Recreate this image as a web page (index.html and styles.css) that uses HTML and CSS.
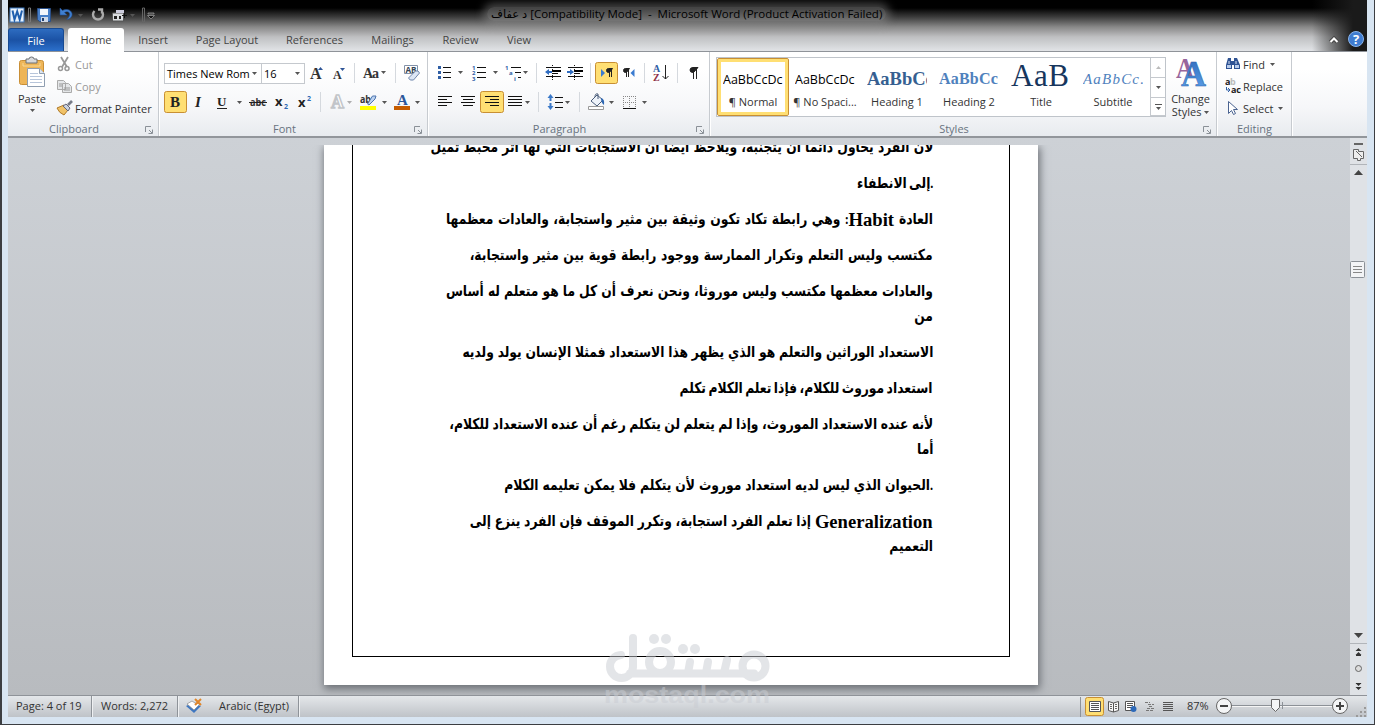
FILE: index.html
```html
<!DOCTYPE html>
<html lang="en">
<head>
  <meta charset="UTF-8" />
  <title>د عفاف [Compatibility Mode] - Microsoft Word</title>
  <link rel="stylesheet" href="styles.css">
</head>
<body>
  <svg class="defs" width="0" height="0">
    <defs>
      <path id="caret" d="M0 0h5L2.500 3z" fill="#555" />
      <path id="launcher" d="M.5 6V.5H6M4 4l3 3M7.500 3.500v4h-4" fill="none" stroke="#8a9097" />
      <linearGradient id="blueA" x1="0" y1="0" x2="0" y2="1"><stop offset="0" stop-color="#2c66b8" /><stop offset="1" stop-color="#5fa6ee" /></linearGradient>
    </defs>
  </svg>
  <div class="window">
    <div class="top">
      <div class="titlebar">
        <svg class="quick" width="150" height="28" viewBox="8 0 150 28">
          <rect x="10" y="8" width="14" height="14" fill="#e9f2fb" stroke="#3a76bd" />
          <path d="M12.500 10.500l2 9 2.700-8 2.500 8 2.300-9" fill="none" stroke="#1f5fae" stroke-width="2" />
          <path d="M28.500 8v14h2V8z" fill="none" stroke="#777" />
          <path d="M37.500 8.500h13v13h-11l-2-2z" fill="#477fc8" stroke="#2b4f86" />
          <path d="M40 9h8v6h-8z" fill="#f3f6fb" /><path d="M41 17h7v5h-7z" fill="#cfd9e8" /><path d="M42 18h2v3h-2z" fill="#24406e" />
          <path d="M60 8v7h7l-2.500-2.500c3-2 6 0 5 3-.5 2-2 3-3 4 4-.5 6-3 5.500-6-1-4-6-5-9.500-3z" fill="#3f7fd0" stroke="#234f90" stroke-width=".6" />
          <use href="#caret" x="78" y="14" />
          <path d="M94.500 11a5 5 0 1 0 7 0M98 9.500h4v4" fill="none" stroke="#aaa" stroke-width="2.400" />
          <path d="M112.500 13h11v8h-11z" fill="#dadde0" stroke="#555" /><path d="M116 10h8v3h-8z" fill="#ccd" /><path d="M114 16h3v3h-3zM119 16h2v3h-2z" fill="#222" /><path d="M122 15.500h5M124.500 13v5" stroke="#111" />
          <use href="#caret" x="130" y="14" />
          <path d="M142.500 8v14h2V8z" fill="none" stroke="#666" />
          <path d="M148 13h6v1h-6zM147.500 15.500h7l-3.500 3.500z" fill="#111" stroke="#bbb" stroke-width=".6" />
        </svg>
        <div class="title"><bdi>د عفاف</bdi> [Compatibility Mode] &nbsp;-&nbsp; Microsoft Word (Product Activation Failed)</div>
      </div>
      <div class="tabs">
        <div class="file">File</div>
        <div class="tab active">Home</div>
        <div class="tab insert">Insert</div>
        <div class="tab layout">Page Layout</div>
        <div class="tab refs">References</div>
        <div class="tab mail">Mailings</div>
        <div class="tab review">Review</div>
        <div class="tab view">View</div>
        <svg class="help" width="40" height="23" viewBox="1327 28 40 23">
          <path d="M1330.500 42l3.500-3.500 3.500 3.500" fill="none" stroke="#444" stroke-width="4" /><path d="M1330.500 42l3.500-3.500 3.500 3.500" fill="none" stroke="#fff" stroke-width="2" />
          <circle cx="1356" cy="39" r="7.500" fill="#3f7cd0" stroke="#8ab4ea" />
          <text x="1356" y="44" text-anchor="middle" font-size="13" font-weight="bold" fill="#fff">?</text>
        </svg>
      </div>
    </div>

    <div class="ribbon">
      <div class="group clipboard">
        <div class="group-body">
          <div class="paste">
            <svg width="28" height="34" viewBox="19 55 28 34">
              <rect x="20.500" y="60.500" width="24" height="24" rx="2" fill="#eeb557" stroke="#c98f36" />
              <path d="M27 61v-2h3q0-2 2.500-2t2.500 2h3v4H27z" fill="#d7d9dc" stroke="#6d7075" />
              <path d="M24 63v3h17v-3" fill="none" stroke="#f8d999" />
              <path d="M28.500 68.500h12l5 5v13h-17z" fill="#fff" stroke="#8e9db0" /><path d="M40.500 68.500v5h5" fill="#dde5ef" stroke="#8e9db0" />
              <path d="M31 73.500h8M31 76.500h12M31 79.500h12M31 82.500h12" stroke="#b7c5da" />
            </svg>
            <span>Paste</span>
            <svg width="5" height="3"><use href="#caret" /></svg>
          </div>
          <div class="clip-list">
            <div class="cmd off">
              <svg width="17" height="16" viewBox="0 0 17 16"><path d="M5 1l6 10M12 1L6 11" stroke="#999" stroke-width="1.800" /><circle cx="4.500" cy="12.500" r="2" fill="none" stroke="#999" stroke-width="1.500" /><circle cx="11" cy="12.500" r="2" fill="none" stroke="#999" stroke-width="1.500" /></svg>
              Cut
            </div>
            <div class="cmd off">
              <svg width="17" height="16" viewBox="0 0 17 16"><path d="M1.500 2.500h6l2 2v7h-8zM6.500 5.500h6l3 3v6h-9z" fill="#e4e6e8" stroke="#aaa" /><path d="M3 6h3M3 8h3M8 10h6M8 12h6" stroke="#999" /></svg>
              Copy
            </div>
            <div class="cmd">
              <svg width="17" height="16" viewBox="0 0 17 16"><path d="M1 8l7-3 4 5-4 5q-5-2-7-7z" fill="#f0c268" stroke="#b07a28" /><path d="M7 6l3-2 4 4-2 3z" fill="#c9d2df" stroke="#667" /><path d="M12 5l4-4" stroke="#777c88" stroke-width="2.600" /></svg>
              Format Painter
            </div>
          </div>
        </div>
        <div class="group-label">Clipboard<svg width="8" height="8"><use href="#launcher" /></svg></div>
      </div>

      <div class="group font">
        <div class="group-body rows">
          <div class="row">
            <div class="combo name">Times New Rom<svg width="5" height="3"><use href="#caret" /></svg></div>
            <div class="combo size">16<svg width="5" height="3"><use href="#caret" /></svg></div>
            <svg width="121" height="24" viewBox="305 61 121 24">
              <g class="serif" fill="#333" font-weight="bold"><text x="310" y="79" font-size="16">A</text><text x="333" y="79" font-size="12">A</text><text x="363" y="78" font-size="14" textLength="16">Aa</text></g>
              <path d="M318 70l2.500-3 2.500 3z" fill="#2f5597" /><path d="M340 68h5l-2.500 3z" fill="#2f5597" />
              <path d="M354.500 63v20M395.500 63v20" stroke="#d5d9de" />
              <use href="#caret" x="381" y="71" />
              <path d="M404.500 65.500h13v8h-13z" fill="#fff" stroke="#8291a8" /><text x="405.500" y="72.500" font-size="8" font-weight="bold" textLength="11" lengthAdjust="spacingAndGlyphs" fill="#345">AB</text>
              <path d="M408.500 78l7-7q3-1 4 2l-6 7q-4 1-5-2z" fill="#dce6f5" stroke="#6f86ab" />
            </svg>
          </div>
          <div class="row">
            <svg width="262" height="24" viewBox="164 90 262 24">
              <rect x="164.500" y="91.500" width="22" height="21" rx="2" fill="#ffdf73" stroke="#c88f33" />
              <g class="serif" fill="#222" font-weight="bold"><text x="170" y="107" font-size="15">B</text><text x="195" y="107" font-size="15" font-style="italic">I</text><text x="217" y="106" font-size="13">U</text></g>
              <path d="M217 108.500h10" stroke="#222" />
              <use href="#caret" x="237" y="101" />
              <text x="250" y="106" font-size="11" font-weight="bold" fill="#333" textLength="16" lengthAdjust="spacingAndGlyphs">abc</text><path d="M249 102.500h18" stroke="#222" />
              <g font-weight="bold" fill="#222"><text x="275" y="106" font-size="13">x</text><text x="298" y="107" font-size="13">x</text></g>
              <g font-weight="bold" fill="#2e69b5" font-size="7"><text x="284" y="109">2</text><text x="307" y="101">2</text></g>
              <path d="M320.500 92v20" stroke="#d5d9de" />
              <text class="serif" x="331" y="108" font-size="18" font-weight="bold" fill="#fff" stroke="#c2c5c9" stroke-width="1.400">A</text>
              <use href="#caret" x="347" y="101" opacity=".45" />
              <text x="360" y="103" font-size="10" font-weight="bold" fill="#333" textLength="11" lengthAdjust="spacingAndGlyphs">ab</text>
              <path d="M367.500 104l5-8 3.500 0-1 3-6 6z" fill="#bcd2f0" stroke="#4d74ae" />
              <path d="M360 106h16v4h-16z" fill="#ffff00" />
              <use href="#caret" x="382" y="101" />
              <text class="serif" x="397" y="105" font-size="15" font-weight="bold" fill="#2b579a">A</text>
              <path d="M394 106h16v4h-16z" fill="#c65c00" />
              <use href="#caret" x="415" y="101" />
            </svg>
          </div>
        </div>
        <div class="group-label">Font<svg width="8" height="8"><use href="#launcher" /></svg></div>
      </div>

      <div class="group paragraph">
        <div class="group-body rows">
          <div class="row">
            <svg width="280" height="24" viewBox="428 61 280 24">
              <path d="M438 66h3v3h-3zM438 71h3v3h-3zM438 76h3v3h-3z" fill="#2f5ea5" />
              <path d="M443 67.500h8M443 72.500h8M443 77.500h8M477 67.500h9M477 72.500h9M477 77.500h9M511 67.500h10M515 72.500h6M518 77.500h3" stroke="#111" />
              <use href="#caret" x="458" y="71" /><use href="#caret" x="493" y="71" /><use href="#caret" x="523" y="71" />
              <g font-size="6" font-weight="bold" fill="#2f5ea5"><text x="472" y="69.500">1</text><text x="472" y="75">2</text><text x="472" y="80.500">3</text><text x="505" y="69.500">1</text><text x="509" y="75">a</text><text x="514" y="80.500">i</text></g>
              <path d="M536.500 63v20M590.500 63v20M644.500 63v20M677.500 63v20" stroke="#d5d9de" />
              <path d="M546 67.500h15M552 70.500h9M552 73.500h6M546 76.500h15M568 67.500h15M574 70.500h9M574 73.500h6M568 76.500h15" stroke="#111" /><path d="M552 70h9v2h-9zM574 70h9v2h-9z" />
              <path d="M552.500 65v15M574.500 65v15" stroke="#111" stroke-dasharray="1 1" />
              <path d="M545 72l4-3v2h3v2h-3v2zM574 72l-4-3v2h-3v2h3v2z" fill="#2f6cc0" />
              <rect x="595.500" y="62.500" width="22" height="21" rx="2" fill="#ffdf73" stroke="#c88f33" />
              <path d="M601 69v8l4-4z" fill="#3a7bd0" /><path d="M634.500 69v8l-4-4z" fill="#3a7bd0" />
              <path id="pilcrow" d="M611.500 69v8M609.500 69v8M612.500 68.500h-4q-2 0-2 2t2 2h1z" fill="#222" stroke="#222" />
              <use href="#pilcrow" x="17" />
              <g font-weight="bold" class="serif" font-size="10"><text x="653" y="72" fill="#2f5ea5">A</text><text x="653" y="81" fill="#8e2f46">Z</text></g>
              <path d="M665.500 65v14M662.500 76l3 3 3-3" stroke="#222" fill="none" />
              <path d="M696.500 68v11M693.500 68v11M698 67.500h-5q-3 0-3 2.500t3 2.500h.5z" fill="#222" stroke="#222" />
            </svg>
          </div>
          <div class="row">
            <svg width="280" height="24" viewBox="428 90 280 24">
              <rect x="480.500" y="91.500" width="23" height="21" rx="2" fill="#ffdf73" stroke="#c88f33" />
              <path d="M438 96.500h14M438 99.500h9M438 102.500h14M438 105.500h9M461 96.500h14M463 99.500h10M461 102.500h14M463 105.500h10M485 96.500h14M490 99.500h9M485 102.500h14M490 105.500h9M508 96.500h14M508 99.500h14M508 102.500h14M508 105.500h14M555 97.500h8M555 102.500h8M555 107.500h8" stroke="#111" />
              <use href="#caret" x="525" y="101" /><use href="#caret" x="565" y="101" /><use href="#caret" x="609" y="101" /><use href="#caret" x="642" y="101" />
              <path d="M550.500 94l3 4h-6zM550.500 110l3-4h-6z" fill="#3a78c8" /><path d="M550.500 97v10" stroke="#3a78c8" stroke-width="2" stroke-dasharray="4 2" />
              <path d="M538.500 92v20M579.500 92v20" stroke="#d5d9de" />
              <path d="M591 101l6-6 6 5-6 6z" fill="#eef3fa" stroke="#4a5d7a" /><path d="M595 97q0-4 3-3v5" stroke="#4a5d7a" fill="none" /><path d="M601 98q4 1 3 7-3-2-3-7z" fill="#2d67b3" />
              <path d="M588.500 106.500h15v3h-15z" fill="#fff" stroke="#999" />
              <path d="M623.500 96v12M629.500 96v12M635.500 96v12M623 96.500h13M623 102.500h13" stroke="#888" stroke-dasharray="1 1" /><path d="M623 108.500h13" stroke="#111" />
            </svg>
          </div>
        </div>
        <div class="group-label">Paragraph<svg width="8" height="8"><use href="#launcher" /></svg></div>
      </div>

      <div class="group styles">
        <div class="group-body">
          <div class="gallery">
            <div class="style selected"><b class="calibri">AaBbCcDc</b><span>¶ Normal</span></div>
            <div class="style"><b class="calibri">AaBbCcDc</b><span>¶ No Spaci...</span></div>
            <div class="style"><b class="h1">AaBbCc</b><span>Heading 1</span></div>
            <div class="style"><b class="h2">AaBbCc</b><span>Heading 2</span></div>
            <div class="style"><b class="big">AaB</b><span>Title</span></div>
            <div class="style"><b class="sub">AaBbCc.</b><span>Subtitle</span></div>
            <div class="gallery-scroll">
              <i><svg width="5" height="3"><path d="M0 3h5L2.500 0z" fill="#bbb" /></svg></i>
              <i><svg width="5" height="3"><use href="#caret" /></svg></i>
              <i><svg width="7" height="6"><path d="M0 .5h7" stroke="#555" /><use href="#caret" x="1" y="3" /></svg></i>
            </div>
          </div>
          <div class="change">
            <svg width="32" height="32" viewBox="1174 57 32 32">
              <g class="serif" font-weight="bold"><text x="1175" y="78" font-size="29" textLength="18" lengthAdjust="spacingAndGlyphs" fill="#97659b">A</text><text x="1180" y="86" font-size="36" textLength="25" lengthAdjust="spacingAndGlyphs" fill="url(#blueA)" stroke="#2b62a8" stroke-width=".5">A</text></g>
            </svg>
            <span>Change</span>
            <span>Styles <svg width="5" height="3"><use href="#caret" /></svg></span>
          </div>
        </div>
        <div class="group-label">Styles<svg width="8" height="8"><use href="#launcher" /></svg></div>
      </div>

      <div class="group editing">
        <div class="group-body">
          <div class="cmd">
            <svg width="16" height="16" viewBox="0 0 16 16"><path d="M3 2h3v3h3V2h3l3 7v4H9V9H7v4H1V9z" fill="#2f5394" /><path d="M2 9h4v3H2zM10 9h4v3h-4z" fill="#b9cdec" /><path d="M4 5v3M11 5v3" stroke="#dce6f5" /></svg>
            Find <svg class="dd" width="5" height="3"><use href="#caret" /></svg>
          </div>
          <div class="cmd">
            <svg width="16" height="16" viewBox="0 0 16 16"><g font-size="9" font-weight="bold" fill="#222"><text x="0" y="7">a</text><text x="5" y="7" fill="#bbb">b</text><text x="6" y="15" textLength="10">ac</text></g><path d="M1.500 9v3h3M3 10l2 2-2 2" stroke="#2f5ea5" fill="none" /></svg>
            Replace
          </div>
          <div class="cmd">
            <svg width="16" height="16" viewBox="0 0 16 16"><path d="M3.500 1.500v12l3-3 2 4 2-1-2-4h4z" fill="#fff" stroke="#4a6390" /></svg>
            Select <svg class="dd" width="5" height="3"><use href="#caret" /></svg>
          </div>
        </div>
        <div class="group-label">Editing</div>
      </div>
    </div>

    <div class="workspace">
      <div class="canvas">
        <div class="page">
          <div class="text" dir="rtl" lang="ar">
            <p class="w503">لأن الفرد يحاول دائما أن يتجنبه، ويلاحظ أيضا أن الاستجابات التي لها أثر محبط تميل</p>
            <p class="w75">.إلى الانطفاء</p>
            <p class="w487">العادة <span class="habit">Habit</span>: وهي رابطة تكاد تكون وثيقة بين مثير واستجابة، والعادات معظمها</p>
            <p class="w463">مكتسب وليس التعلم وتكرار الممارسة ووجود رابطة قوية بين مثير واستجابة،</p>
            <p class="w487">والعادات معظمها مكتسب وليس موروثا، ونحن نعرف أن كل ما هو متعلم له أساس</p>
            <p class="w18 wrap">من</p>
            <p class="w471">الاستعداد الوراثين والتعلم هو الذي يظهر هذا الاستعداد فمثلا الإنسان يولد ولديه</p>
            <p class="w253">استعداد موروث للكلام، فإذا تعلم الكلام تكلم</p>
            <p class="w484">لأنه عنده الاستعداد الموروث، وإذا لم يتعلم لن يتكلم رغم أن عنده الاستعداد للكلام،</p>
            <p class="w16 wrap">أما</p>
            <p class="w429">.الحيوان الذي ليس لديه استعداد موروث لأن يتكلم فلا يمكن تعليمه الكلام</p>
            <p class="w463"><span class="general">Generalization</span> إذا تعلم الفرد استجابة، وتكرر الموقف فإن الفرد ينزع إلى</p>
            <p class="w41 wrap">التعميم</p>
          </div>
        </div>
      </div>
      <div class="scrollbar">
        <svg width="17" height="35" viewBox="1350 141 17 35">
          <path d="M1354 143h9v2h-9z" fill="#666" /><path d="M1353.500 149.500h5v2h5v7h-3v2h-3v-2h-4zM1356 151l6 6" fill="#eee" stroke="#666" />
          <path d="M1350 164.500h17" stroke="#b1b5ba" /><path d="M1354 175h9l-4.500-5z" fill="#444" />
        </svg>
        <svg class="thumb" width="17" height="18" viewBox="0 0 17 18"><rect x=".5" y=".5" width="14" height="16" rx="1" fill="#f3f4f6" stroke="#8b9097" /><path d="M3 5.500h9M3 8.500h9M3 11.500h9" stroke="#888" /></svg>
        <svg width="17" height="64" viewBox="1350 631 17 64">
          <path d="M1354 633h9l-4.500 5z" fill="#444" /><path d="M1350 643.500h17" stroke="#b1b5ba" />
          <path d="M1355.500 651h6l-3-3zM1355.500 655h6l-3-3zM1355.500 683h6l-3 3zM1355.500 687h6l-3 3z" fill="#333" /><path d="M1356 655.500h5M1356 683.500h5" stroke="#333" />
          <circle cx="1358.500" cy="668.500" r="3" fill="#ddd" stroke="#666" />
        </svg>
      </div>
    </div>

    <div class="statusbar">
      <div class="cell pages">Page: 4 of 19</div>
      <div class="cell words">Words: 2,272</div>
      <div class="cell lang">
        <svg width="17" height="16" viewBox="186 698 17 16"><path d="M186 706l6-3 9 3-7 7z" fill="#3f77c0" /><path d="M187 704l5-3 3 2 5 1-6 6z" fill="#fff" stroke="#888" stroke-width=".7" /><path d="M195 699l6 6M201 699l-6 6" stroke="#e0862a" stroke-width="2" /></svg>
        <span>Arabic (Egypt)</span>
      </div>
      <svg class="views" width="100" height="21" viewBox="1080 696 100 21">
        <path d="M1080.500 697v20" stroke="#8e9399" />
        <rect x="1085.500" y="697.500" width="18" height="18" rx="2" fill="#ffdf73" stroke="#c88f33" />
        <path d="M1089.500 701.500h11v10h-11z" fill="#fff" stroke="#555" /><path d="M1091 703.500h8M1091 705.500h8M1091 707.500h8M1091 709.500h8" stroke="#555" />
        <path d="M1108.500 701.500l5 1.500 5-1.500v9l-5 1.500-5-1.500zM1113.500 703v9" fill="#f7f7f7" stroke="#555" /><path d="M1110 704.500h2M1110 706.500h2M1110 708.500h2M1115 704.500h2M1115 706.500h2M1115 708.500h2" stroke="#666" />
        <path d="M1125.500 701.500h9v9h-9z" fill="#fff" stroke="#555" /><path d="M1127 703.500h6M1127 705.500h6M1127 707.500h4" stroke="#555" /><circle cx="1133.500" cy="709" r="3" fill="#2d69b8" />
        <path d="M1145 702.500h5M1148 704.500h6M1149 706.500h4M1147 708.500h7M1146 710.500h8" stroke="#777" stroke-dasharray="3 1" />
        <path d="M1163 702.500h10M1163 704.500h10M1163 706.500h10M1163 708.500h10M1163 710.500h10" stroke="#555" />
      </svg>
      <div class="zoom">87%</div>
      <svg width="155" height="21" viewBox="1212 696 155 21">
        <path d="M1231 705.500h102" stroke="#8c9197" /><path d="M1231 706.500h102" stroke="#f5f5f5" /><path d="M1282.500 702v7" stroke="#8c9197" />
        <g fill="#f4f5f6" stroke="#666"><circle cx="1224" cy="706" r="7.500" /><circle cx="1340" cy="706" r="7.500" /><path d="M1271.500 699.500h8v8l-4 4-4-4z" /></g>
        <path d="M1220 706h8M1336 706h8M1340 702v8" stroke="#444" stroke-width="2" />
        <path d="M1364 707h2v2h-2zM1360 711h2v2h-2zM1364 711h2v2h-2zM1356 715h2v2h-2zM1360 715h2v2h-2zM1364 715h2v2h-2z" fill="#999" />
      </svg>
    </div>

    <svg class="watermark" width="170" height="78" viewBox="602 630 170 78">
      <g fill="none" stroke="#c9ccd2" stroke-width="8" stroke-linecap="round">
        <path d="M621 655a11.500 11.500 0 1 0 12 12V638M630 673.500H754" />
        <circle cx="754" cy="666" r="11.500" /><circle cx="660" cy="662" r="11" />
        <path d="M688 673l2-11M706 673l2-11M724 673l3-13" />
      </g>
      <g fill="#c9ccd2"><circle cx="654" cy="639" r="5" /><circle cx="666" cy="639" r="5" /><circle cx="683" cy="649" r="5" /><circle cx="695" cy="649" r="5" />
        <text x="604" y="703" textLength="166" lengthAdjust="spacingAndGlyphs">mostaql.com</text></g>
    </svg>
  </div>
</body>
</html>
```
FILE: styles.css
```css
* {
  box-sizing: border-box;
}
body {
  margin: 0;
  font-family: "Open Sans", "DejaVu Sans", sans-serif;
  font-size: 11px;
  color: #333;
  background: #000;
  overflow: hidden;
}
svg {
  display: block;
  flex: none;
}
.defs {
  position: absolute;
}
.serif {
  font-family: "Liberation Serif", serif;
}
.window {
  position: relative;
  width: 1375px;
  height: 725px;
  padding: 0 7px 0 6px;
  border: solid #3c3e42;
  border-width: 0 1px 1px 2px;
  background: #d8e5f2;
  display: flex;
  flex-direction: column;
}
.top {
  height: 52px;
  border-bottom: 1px solid #8f9399;
  background:
    linear-gradient(90deg, rgba(0,0,0,0) 1304px, #1a1a1a 1345px),
    linear-gradient(#000 8px, #3c3c3c 17px, #888 27px, #bfc0c2 37px, #e2e4e7 51px);
}
.titlebar {
  height: 28px;
  display: flex;
}
.title {
  margin-left: 329px;
  padding: 0 4px;
  height: 14px;
  margin-top: 7px;
  line-height: 14px;
  color: #000;
  font-size: 11.5px;
  letter-spacing: -0.02px;
  white-space: nowrap;
  border-radius: 8px;
  background: rgba(150, 150, 150, 0.45);
  box-shadow: 0 0 8px 4px rgba(150, 150, 150, 0.45);
}
.tabs {
  height: 23px;
  display: flex;
  line-height: 24px;
  color: #444;
}
.file {
  width: 56px;
  text-align: center;
  color: #fff;
  line-height: 23px;
  border: 1px solid #174a92;
  border-bottom: none;
  border-radius: 3px 3px 0 0;
  background: linear-gradient(#2d6cc0, #1b52a5 50%, #2c70cb);
}
.tab {
  text-align: center;
}
.active {
  width: 56px;
  height: 25px;
  margin-left: 4px;
  border-radius: 3px 3px 0 0;
  background: #fff;
}
.insert { width: 58px; }
.layout { width: 90px; }
.refs { width: 85px; }
.mail { width: 71px; }
.review { width: 65px; }
.view { width: 52px; }
.help {
  margin-left: auto;
}
.ribbon {
  height: 86px;
  display: flex;
  background: linear-gradient(#fff 20%, #f6f7f9 65%, #e8ebef);
  border-bottom: 2px solid #92969b;
}
.group {
  border-right: 1px solid #c7cbd0;
  box-shadow: 1px 0 #fff;
  display: flex;
  flex-direction: column;
}
.group-body {
  height: 70px;
  display: flex;
}
.rows {
  flex-direction: column;
  padding-top: 9px;
  gap: 5px;
}
.row {
  display: flex;
  height: 24px;
  align-items: center;
}
.group-label {
  position: relative;
  height: 14px;
  line-height: 14px;
  text-align: center;
  color: #68737f;
}
.group-label svg {
  position: absolute;
  right: 5px;
  top: 4px;
}
.clipboard { width: 151px; }
.clipboard .group-label { padding-right: 18px; }
.font { width: 269px; padding-left: 5px; }
.font .group-label { padding-right: 22px; }
.paragraph { width: 282px; }
.paragraph .group-label { padding-right: 18px; }
.styles { width: 507px; }
.styles .group-label { padding-right: 18px; }
.editing { width: 75px; padding-left: 8px; }
.editing .group-label { padding-right: 7px; }
.paste {
  width: 48px;
  padding-top: 3px;
  display: flex;
  flex-direction: column;
  align-items: center;
  line-height: 20px;
}
.clip-list {
  padding-top: 1px;
}
.cmd {
  height: 22px;
  display: flex;
  align-items: center;
  gap: 3px;
  white-space: nowrap;
}
.clip-list .cmd { gap: 2px; }
.off {
  color: #999;
}
.combo {
  height: 21px;
  border: 1px solid #c5c9ce;
  background: #fff;
  color: #000;
  display: flex;
  align-items: center;
  justify-content: space-between;
  padding: 0 4px 0 2px;
  line-height: 17px;
  white-space: nowrap;
}
.name { width: 98px; }
.size { width: 43px; border-left: none; }
.gallery {
  width: 450px;
  height: 60px;
  margin: 5px 0 0 6px;
  border: 1px solid #bfc4ca;
  background: #fff;
  display: flex;
}
.style {
  width: 72px;
  padding: 0 6px;
  text-align: center;
  white-space: nowrap;
  overflow: hidden;
}
.style b {
  display: flex;
  align-items: center;
  height: 36px;
  overflow: hidden;
  font-weight: normal;
  color: #000;
}
.style span {
  display: block;
  margin: 0 -6px;
  line-height: 16px;
}
.selected {
  height: 58px;
  padding: 0 3px;
  border: 1px solid #c88f33;
  border-radius: 2px;
  box-shadow: inset 0 0 0 3px #ffdf73;
}
.selected b { height: 35px; margin: 0 2px; }
.style .calibri { font-family: "Open Sans", sans-serif; font-size: 12.5px; padding-top: 6px; }
.style .h1 { font: bold 18.5px "Liberation Serif", serif; color: #365f91; padding-top: 6px; }
.style .h2 { font: bold 16px "Liberation Serif", serif; color: #4f81bd; padding-top: 6px; letter-spacing: 0.2px; }
.style .big { font: 31px "Liberation Serif", serif; color: #17365d; letter-spacing: 0.5px; }
.style .sub { font: italic 15px "Liberation Serif", serif; color: #4f81bd; letter-spacing: 1.2px; padding-top: 6px; }
.gallery-scroll {
  width: 15px;
  margin-left: auto;
  border-left: 1px solid #c5c9ce;
  display: grid;
  grid-template-rows: 20px 20px 18px;
}
.gallery-scroll i {
  display: grid;
  place-items: center;
  border-bottom: 1px solid #c5c9ce;
}
.change {
  width: 49px;
  padding-top: 5px;
  display: flex;
  flex-direction: column;
  align-items: center;
  line-height: 13px;
}
.change svg + span { margin-top: 3px; }
.change span svg { display: inline-block; vertical-align: 2px; }
.editing .group-body {
  flex-direction: column;
  padding-top: 1px;
}
.editing .cmd { gap: 2px; }
.dd { margin-left: 3px; }
.workspace {
  height: 557px;
  display: flex;
  background: linear-gradient(#cdd1d6, #b8bbbf);
}
.canvas {
  width: 1342px;
  padding: 7px 0 0 316px;
  overflow: hidden;
}
.page {
  width: 714px;
  height: 540px;
  padding: 0 28px 28px;
  background: #fff;
  box-shadow: 1px 3px 8px 1px #6c7076;
  clip-path: inset(0 -15px -15px -15px);
}
.text {
  height: 512px;
  padding-right: 76px;
  border: solid #000;
  border-width: 0 1px 1px;
  overflow: hidden;
  font: bold 15px "Liberation Serif", "DejaVu Sans", serif;
  color: #000;
}
/* lines are condensed, so every width is divided by the same factor */
.text p {
  height: 25px;
  margin: 0;
  line-height: 25px;
  white-space: nowrap;
  word-spacing: -1px;
  text-align: justify;
  text-align-last: justify;
  transform: scaleX(0.82);
  transform-origin: right;
}
.text p + p { margin-top: 11px; }
.text p:first-child { margin-top: -10px; }
.text p.wrap { margin-top: 0; }
.text span {
  display: inline-block;
  height: 25px;
  font-size: 18.6px;
  vertical-align: top;
  transform: scaleX(1.22);
}
.habit { margin: 0 5px; }
.general { margin: 0 13px; }
.w503 { width: calc(503px / 0.82); }
.w75 { width: calc(75px / 0.82); }
.w487 { width: calc(487px / 0.82); }
.w463 { width: calc(463px / 0.82); }
.w18 { width: calc(18px / 0.82); }
.w471 { width: calc(471px / 0.82); }
.w253 { width: calc(253px / 0.82); }
.w484 { width: calc(484px / 0.82); }
.w16 { width: calc(16px / 0.82); }
.w429 { width: calc(429px / 0.82); }
.w41 { width: calc(41px / 0.82); }
.scrollbar {
  width: 17px;
  padding-top: 3px;
  background: #dfe2e6;
  display: flex;
  flex-direction: column;
}
.thumb { margin: 85px 0 auto; }
.statusbar {
  height: 22px;
  border-top: 1px solid #8f9399;
  background: linear-gradient(#e4e7ea, #bfc3c8);
  display: flex;
  line-height: 20px;
  white-space: nowrap;
}
.cell {
  border-right: 1px solid #8e9399;
  box-shadow: 1px 0 #eef0f2;
}
.pages { width: 84px; padding-left: 8px; }
.words { width: 86px; padding-left: 9px; }
.lang { width: 121px; padding: 2px 0 0 8px; display: flex; gap: 16px; line-height: 16px; }
.views { margin-left: auto; }
.zoom { width: 32px; padding-left: 7px; }
.watermark {
  position: absolute;
  left: 600px;
  top: 630px;
  opacity: 0.5;
  font: bold 23px "Liberation Sans", sans-serif;
}
```
